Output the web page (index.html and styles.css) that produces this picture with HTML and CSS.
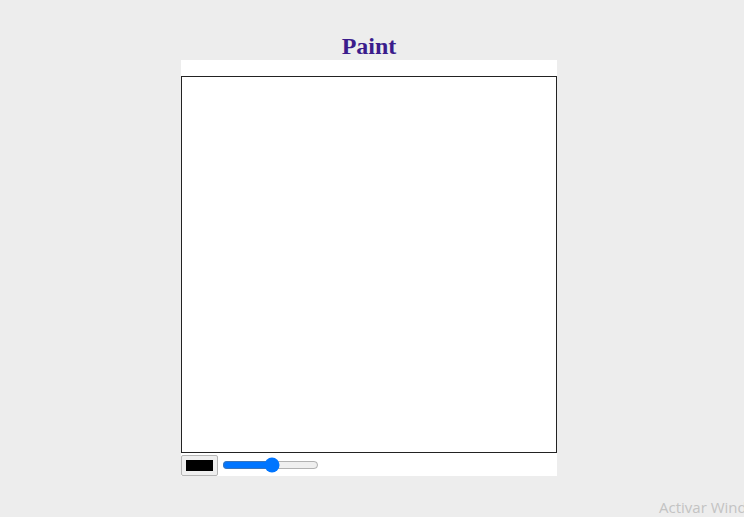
FILE: index.html
```html
<!DOCTYPE html>
<html>
<head>
<meta charset="utf-8">
<link rel="stylesheet" href="styles.css">
</head>
<body>
<div class="app">
  <h1 class="title">Paint</h1>
  <div class="board">
    <div class="canvas"></div>
    <div class="controls">
      <div class="color"><div class="swatch"></div></div>
      <input class="size" type="range" min="1" max="100" value="52">
    </div>
  </div>
</div>
<div class="watermark">Activar Windows</div>
</body>
</html>
```
FILE: styles.css
```css
html, body {
  margin: 0;
  padding: 0;
  background: #ededed;
  overflow: hidden;
}
body {
  width: 744px;
  height: 517px;
  position: relative;
}
.app {
  width: 376px;
  margin-left: 181px;
  padding-top: 33px;
}
.title {
  margin: 0;
  height: 27px;
  font-family: "Liberation Serif", serif;
  font-size: 24px;
  line-height: 27px;
  font-weight: bold;
  color: #3b1c8c;
  text-align: center;
}
.board {
  background: #fff;
  padding-top: 16px;
}
.canvas {
  box-sizing: border-box;
  width: 376px;
  height: 377px;
  border: 1px solid #222;
  background: #fff;
}
.controls {
  display: flex;
  align-items: center;
  height: 23px;
  gap: 4px;
}
.color {
  box-sizing: border-box;
  width: 37px;
  height: 21px;
  margin-top: 2px;
  border: 1px solid #b5b5b5;
  background: #efefef;
  padding: 4px 4px;
  border-radius: 2px;
}
.swatch {
  width: 100%;
  height: 100%;
  background: #000;
}
.size {
  width: 97px;
  margin: 1px 0 0 0;
}
.watermark {
  position: absolute;
  left: 659px;
  top: 497px;
  white-space: nowrap;
  font-family: "Open Sans", sans-serif;
  font-size: 15px;
  color: #c3c3c3;
}
```
